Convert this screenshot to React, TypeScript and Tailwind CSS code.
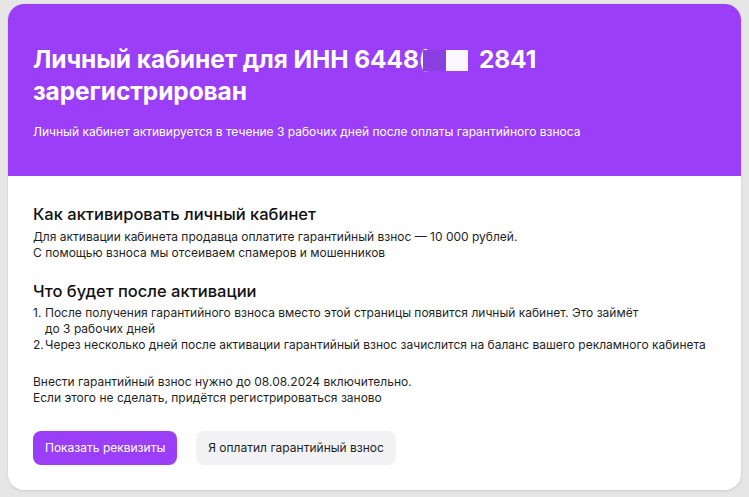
import React from 'react';

const App: React.FC = () => {
  return (
    <div className="min-h-screen bg-[#e6e6e6] px-2 pt-1 pb-2" style={{ fontFamily: 'Inter, "Noto Sans", sans-serif' }}>
      <div className="w-[733px] overflow-hidden rounded-2xl bg-white shadow-[0_1px_3px_rgba(0,0,0,0.12)]">
        {/* Header */}
        <div className="h-[172px] bg-[#9a3ff7] px-[25px] pt-[39px]">
          <h1 className="text-[24.5px] font-bold leading-[32px] tracking-[-0.1px] text-white">
            Личный кабинет для ИНН 6448(
            <span className="relative ml-[-5px] inline-block h-[21px] w-[23px] align-[-3px] bg-[#8a3fe0]" />
            <span className="inline-block h-[21px] w-[22px] align-[-3px] bg-[#fdf7ff]" />
            <span className="ml-[11px]">2841</span>
            <br />
            зарегистрирован
          </h1>
          <p className="mt-[17px] text-[12px] leading-4 text-white">
            Личный кабинет активируется в течение 3 рабочих дней после оплаты гарантийного взноса
          </p>
        </div>

        {/* Body */}
        <div className="px-[25px] pt-[26px] pb-[25px] text-[#1f1f1f]">
          <h2 className="text-[16.5px] font-medium leading-6 text-[#111]">Как активировать личный кабинет</h2>
          <p className="mt-[3px] text-[12px] leading-4">
            Для активации кабинета продавца оплатите гарантийный взнос — 10 000 рублей.
            <br />
            С помощью взноса мы отсеиваем спамеров и мошенников
          </p>

          <h2 className="mt-[18px] text-[16.5px] font-medium leading-6 text-[#111]">Что будет после активации</h2>
          <ol className="mt-[2px] text-[12px] leading-4">
            <li className="flex">
              <span className="w-[12px] shrink-0">1.</span>
              <span>
                После получения гарантийного взноса вместо этой страницы появится личный кабинет. Это займёт
                <br />
                до 3 рабочих дней
              </span>
            </li>
            <li className="flex">
              <span className="w-[12px] shrink-0">2.</span>
              <span>Через несколько дней после активации гарантийный взнос зачислится на баланс вашего рекламного кабинета</span>
            </li>
          </ol>

          <p className="mt-[21px] text-[12px] leading-4">
            Внести гарантийный взнос нужно до 08.08.2024 включительно.
            <br />
            Если этого не сделать, придётся регистрироваться заново
          </p>

          <div className="mt-[25px] flex gap-[19px]">
            <button className="h-[34px] rounded-lg bg-[#9a3ff7] px-[12px] text-[12px] text-white">
              Показать реквизиты
            </button>
            <button className="h-[34px] rounded-lg bg-[#f2f2f5] px-[12px] text-[12px] text-[#1f1f1f]">
              Я оплатил гарантийный взнос
            </button>
          </div>
        </div>
      </div>
    </div>
  );
};

export default App;
